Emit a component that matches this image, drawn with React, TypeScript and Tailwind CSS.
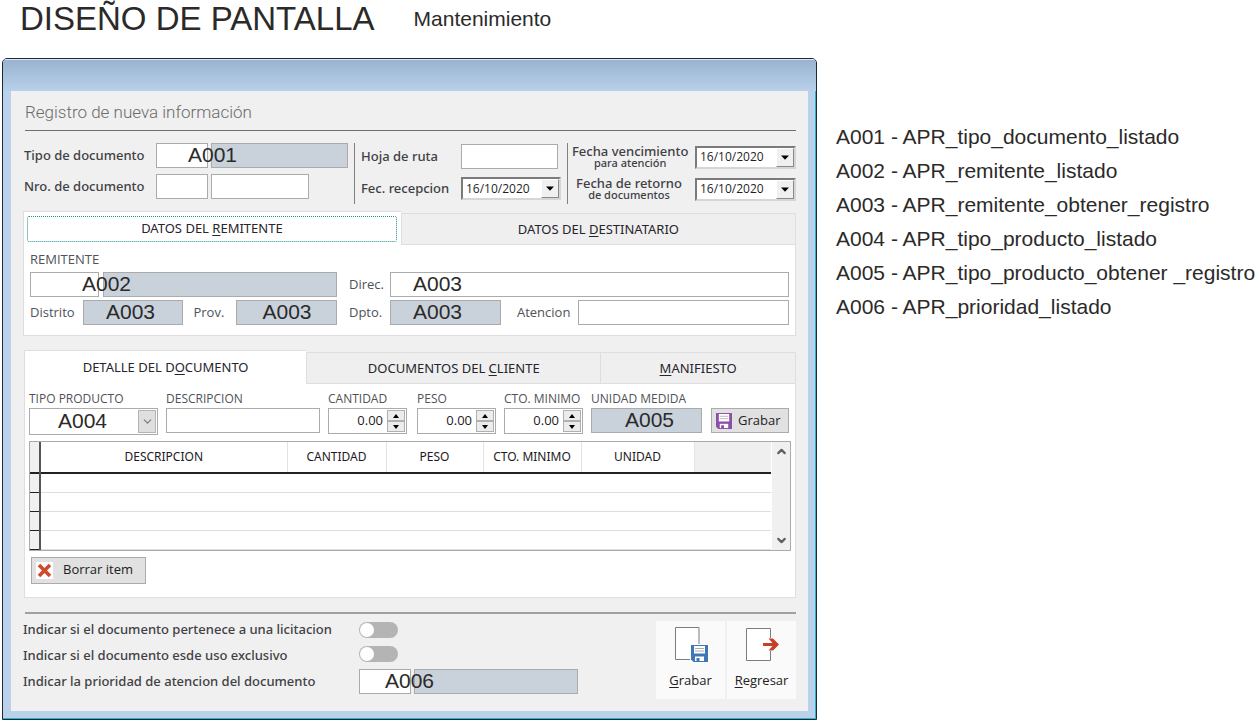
import React from 'react';
import { ChevronDown, ChevronUp } from 'lucide-react';

const boxBase = 'block h-[25px] min-w-0 border border-[#ababab] px-1 text-[13px] outline-none';

function Box({ id, label, className = '', filled = false }: { id?: string; label: string; className?: string; filled?: boolean }) {
  return (
    <input
      id={id}
      type="text"
      aria-label={id ? undefined : label}
      readOnly={filled}
      className={`${boxBase} ${filled ? 'bg-[#c9d1db]' : 'bg-white'} ${className}`}
    />
  );
}

function Note({ children, className }: { children: string; className: string }) {
  return (
    <span className={`pointer-events-none absolute top-0 font-['Liberation_Sans',sans-serif] text-[21px] leading-[24px] text-[#2b2a29] ${className}`}>
      {children}
    </span>
  );
}

function CodedBox({ id, label, code, className = '', notePlace, filled = true }: { id: string; label: string; code: string; className?: string; notePlace: string; filled?: boolean }) {
  return (
    <div className={`relative ${className}`}>
      <Box id={id} label={label} filled={filled} className="w-full" />
      <Note className={notePlace}>{code}</Note>
    </div>
  );
}

function DateBox({ id, className = '' }: { id: string; className?: string }) {
  return (
    <div className={`flex h-[23px] border-2 border-t-[#7b7b7b] border-l-[#7b7b7b] border-r-[#d6d6d6] border-b-[#d6d6d6] bg-white ${className}`}>
      <input id={id} type="text" defaultValue="16/10/2020" className="min-w-0 flex-1 bg-transparent pl-[3px] text-[12px] text-[#1f1f1f] outline-none" />
      <button type="button" aria-label="Abrir calendario" className="flex w-[18px] shrink-0 items-center justify-center border border-t-white border-l-white border-r-[#8a8a8a] border-b-[#8a8a8a] bg-[#f0f0f0]">
        <svg width="8" height="5" viewBox="0 0 8 5"><path d="M0 0.5h8L4 4.8z" fill="#000" /></svg>
      </button>
    </div>
  );
}

function Spinner({ id, label, className }: { id: string; label: string; className: string }) {
  return (
    <div className={className}>
      <label htmlFor={id} className={smallCaps}>{label}</label>
      <div className="flex h-[26px] border border-[#ababab] bg-white p-px">
        <input id={id} type="text" defaultValue="0.00" className="min-w-0 flex-1 bg-transparent pr-1 text-right text-[13px] text-[#222] outline-none" />
        <div className="flex w-[18px] flex-col">
          <button type="button" aria-label={`Aumentar ${label}`} className="flex flex-1 items-center justify-center border border-[#b0b0b0] bg-[#ececec]">
            <svg width="6" height="4" viewBox="0 0 6 4"><path d="M0 4h6L3 0z" fill="#000" /></svg>
          </button>
          <button type="button" aria-label={`Disminuir ${label}`} className="flex flex-1 items-center justify-center border border-[#b0b0b0] bg-[#ececec]">
            <svg width="6" height="4" viewBox="0 0 6 4"><path d="M0 0h6L3 4z" fill="#000" /></svg>
          </button>
        </div>
      </div>
    </div>
  );
}

function Toggle({ id }: { id: string }) {
  return (
    <input
      id={id}
      type="checkbox"
      role="switch"
      className="h-4 w-[39px] appearance-none rounded-full bg-[#b4b4b4] p-px before:block before:size-[14px] before:rounded-full before:bg-white checked:bg-[#3f76b5] checked:pl-6"
    />
  );
}

function Floppy({ color, size }: { color: string; size: number }) {
  return (
    <svg width={size} height={size} viewBox="0 0 17 17">
      <path d="M0 0h17v17H2.500L0 14.500z" fill={color} />
      <path d="M3 1h11v8H3z" fill="#fff" />
      <path d="M4 3.500h9M4 6h9" stroke="#b5b5b5" />
      <path d="M4 11.500h9V16H4z" fill="#fff" />
      <path d="M5.500 13h3v3h-3z" fill={color} />
    </svg>
  );
}

const formLabel = "font-['Noto_Sans',sans-serif] text-[13px] font-medium text-[#3f4145] whitespace-nowrap";
const panelLabel = 'text-[13px] text-[#4f5257] whitespace-nowrap';
const smallCaps = 'block h-[18px] text-[12px] leading-[18px] text-[#4f5257] whitespace-nowrap';
const tabText = "font-['Noto_Sans',sans-serif] text-[13px] text-[#26242c]";
const idleTab = `mt-[2px] h-[32px] border border-[#dedede] bg-[#efefef] pt-[2px] ${tabText}`;

function Window() {
  return (
    <main className="min-w-0 flex-1 overflow-hidden rounded-t-[5px] border border-[#1d2a33] bg-[#b9d1ea] font-['Open_Sans','Noto_Sans',sans-serif]">
      <div className="h-8 bg-linear-to-b from-[#98b2d0] to-[#b8d0e9] shadow-[inset_0_1px_0_#dfe8f2]" />
      <div className="border-r border-b border-[#27b5cf] pr-[7px] pb-[7px] pl-2">
        <form className="bg-[#f0f0f0] pt-2 pr-3 pb-[12px] pl-[13px]" onSubmit={(e) => e.preventDefault()}>
          <h2 className="ml-px border-b border-[#707070] pb-[5px] font-['Roboto',sans-serif] text-[17px] leading-[26px] font-light text-[#6b6b6b]">
            Registro de nueva información
          </h2>

          <div className="mt-3 flex h-[61px]">
            <div className="flex min-w-0 flex-1 flex-col gap-[6px]">
              <div className="flex items-center">
                <label htmlFor="tipo" className={`${formLabel} w-[132px] shrink-0`}>Tipo de documento</label>
                <div className="relative flex min-w-0 flex-1 gap-[3px]">
                  <Box id="tipo" label="Tipo" className="w-[52px]" />
                  <Box label="Descripción del tipo" filled className="flex-1" />
                  <Note className="left-8">A001</Note>
                </div>
              </div>
              <div className="flex items-center">
                <label htmlFor="nro" className={`${formLabel} w-[132px] shrink-0`}>Nro. de documento</label>
                <div className="flex gap-[3px]">
                  <Box id="nro" label="Serie" className="w-[52px]" />
                  <Box label="Número" className="w-[98px]" />
                </div>
              </div>
            </div>
            <div className="mx-[6px] w-px shrink-0 bg-[#808080]" />
            <div className="flex w-[200px] shrink-0 flex-col gap-2 pt-px">
              <div className="flex items-center">
                <label htmlFor="hoja" className={`${formLabel} flex-1`}>Hoja de ruta</label>
                <Box id="hoja" label="Hoja" className="mr-[3px] w-[97px]" />
              </div>
              <div className="flex items-center">
                <label htmlFor="recep" className={`${formLabel} flex-1`}>Fec. recepcion</label>
                <DateBox id="recep" className="w-[100px]" />
              </div>
            </div>
            <div className="mr-1 ml-[6px] w-px shrink-0 bg-[#808080]" />
            <div className="flex w-[224px] shrink-0 flex-col gap-[10px] pt-[3px]">
              <div className="flex h-[22px] items-center justify-between">
                <label htmlFor="venc" className={`${formLabel} text-center leading-[11px]`}>
                  Fecha vencimiento<br /><span className="text-[11px]">para atención</span>
                </label>
                <DateBox id="venc" className="w-[101px]" />
              </div>
              <div className="flex h-[22px] items-center justify-between">
                <label htmlFor="ret" className={`${formLabel} w-[114px] text-center leading-[11px]`}>
                  Fecha de retorno<br /><span className="text-[11px]">de documentos</span>
                </label>
                <DateBox id="ret" className="w-[101px]" />
              </div>
            </div>
          </div>

          <section className="mt-[7px] -ml-px border border-t-0 border-[#dedede] bg-white">
            <div role="tablist" className="-mx-px flex bg-[#f0f0f0]">
              <button type="button" role="tab" aria-selected="true" className={`h-[34px] flex-[378] border-t border-l border-[#dedede] bg-white p-[3px] pr-1 ${tabText}`}>
                <span className="flex h-[26px] items-center justify-center rounded-[2px] border border-dotted border-[#1a958c]">
                  <span>DATOS DEL <u className="underline-offset-2">R</u>EMITENTE</span>
                </span>
              </button>
              <button type="button" role="tab" aria-selected="false" className={`${idleTab} flex-[402]`}>
                DATOS DEL <u className="underline-offset-2">D</u>ESTINATARIO
              </button>
            </div>
            <div className="px-[6px] pt-[5px] pb-[10px]">
              <label htmlFor="rem" className={`${panelLabel} block leading-[18px]`}>REMITENTE</label>
              <div className="mt-1 flex items-center">
                <div className="relative flex flex-1 gap-1">
                  <Box id="rem" label="Remitente" className="w-[69px]" />
                  <Box label="Nombre del remitente" filled className="flex-1" />
                  <Note className="left-[52px]">A002</Note>
                </div>
                <label htmlFor="direc" className={`${panelLabel} w-[53px] pl-3`}>Direc.</label>
                <CodedBox id="direc" label="Direc." code="A003" filled={false} className="flex-[1.3]" notePlace="left-[23px]" />
              </div>
              <div className="mt-[3px] flex items-center">
                <div className="flex flex-1 items-center">
                  <label htmlFor="dist" className={`${panelLabel} w-[53px]`}>Distrito</label>
                  <CodedBox id="dist" label="Distrito" code="A003" className="flex-1" notePlace="left-[23px]" />
                  <label htmlFor="prov" className={`${panelLabel} w-[53px] pl-[10px]`}>Prov.</label>
                  <CodedBox id="prov" label="Prov." code="A003" className="flex-1" notePlace="left-[26px]" />
                </div>
                <label htmlFor="dpto" className={`${panelLabel} w-[53px] pl-3`}>Dpto.</label>
                <div className="flex flex-[1.3] items-center">
                  <CodedBox id="dpto" label="Dpto." code="A003" className="w-[111px]" notePlace="left-[23px]" />
                  <label htmlFor="aten" className={`${panelLabel} w-[77px] pl-4`}>Atencion</label>
                  <Box id="aten" label="Atencion" className="flex-1" />
                </div>
              </div>
            </div>
          </section>

          <section className="mt-[14px] border border-t-0 border-[#dedede] bg-white">
            <div role="tablist" className="-mx-px flex bg-[#f0f0f0]">
              <button type="button" role="tab" aria-selected="true" className={`h-[34px] flex-[283] border-t border-l border-[#dedede] bg-white ${tabText}`}>
                DETALLE DEL D<u className="underline-offset-2">O</u>CUMENTO
              </button>
              <button type="button" role="tab" aria-selected="false" className={`${idleTab} flex-[295]`}>
                DOCUMENTOS DEL <u className="underline-offset-2">C</u>LIENTE
              </button>
              <button type="button" role="tab" aria-selected="false" className={`${idleTab} flex-[195] border-l-0`}>
                <u className="underline-offset-2">M</u>ANIFIESTO
              </button>
            </div>

            <div className="px-1 pt-[6px] pb-[13px]">
              <div className="flex items-start pr-[2px]">
                <div className="w-[129px]">
                  <label htmlFor="prod" className={smallCaps}>TIPO PRODUCTO</label>
                  <div className="relative">
                    <select id="prod" className="block h-[27px] w-full appearance-none border border-[#ababab] bg-white pb-[2px] pl-7 font-['Liberation_Sans',sans-serif] text-[21px] leading-[22px] text-[#2b2a29]">
                      <option>A004</option>
                    </select>
                    <span className="pointer-events-none absolute top-[2px] right-[2px] flex h-[23px] w-[18px] items-center justify-center border border-[#b4b4b4] bg-[#dfdfdf]">
                      <ChevronDown size={13} strokeWidth={2} className="text-[#777]" />
                    </span>
                  </div>
                </div>
                <div className="ml-2 flex-1">
                  <label htmlFor="desc" className={smallCaps}>DESCRIPCION</label>
                  <Box id="desc" label="Descripcion" className="w-full" />
                </div>
                <Spinner id="cant" label="CANTIDAD" className="ml-2 w-[79px]" />
                <Spinner id="peso" label="PESO" className="ml-[10px] w-[79px]" />
                <Spinner id="cto" label="CTO. MINIMO" className="ml-2 w-[79px]" />
                <div className="ml-2 w-[111px]">
                  <label htmlFor="unidad" className={smallCaps}>UNIDAD MEDIDA</label>
                  <CodedBox id="unidad" label="Unidad" code="A005" notePlace="left-[34px]" />
                </div>
                <button type="button" className="mt-[18px] ml-[9px] flex h-[25px] w-[78px] items-center gap-[6px] border border-[#ababab] bg-[#e1e1e1] pl-1 text-[13px] text-[#222]">
                  <Floppy color="#8d4ea8" size={16} />
                  Grabar
                </button>
              </div>

              <div className="mt-[6px] flex border border-[#a9abb0]">
                <table className="flex-1 table-fixed border-collapse text-[12px] text-[#1c1a22]">
                  <colgroup>
                    <col className="w-[10px]" />
                    <col />
                    <col className="w-[99px]" />
                    <col className="w-[97px]" />
                    <col className="w-[98px]" />
                    <col className="w-[113px]" />
                    <col className="w-[77px]" />
                  </colgroup>
                  <thead className="font-['Noto_Sans',sans-serif]">
                    <tr className="h-[31px] border-b-2 border-[#222]">
                      <td className="border-r-2 border-r-[#555] bg-[#f0f0f0]" />
                      <th className="border-r border-r-[#e3e3e3] font-normal">DESCRIPCION</th>
                      <th className="border-r border-r-[#e3e3e3] font-normal">CANTIDAD</th>
                      <th className="border-r border-r-[#e3e3e3] font-normal">PESO</th>
                      <th className="border-r border-r-[#e3e3e3] font-normal whitespace-nowrap">CTO. MINIMO</th>
                      <th className="border-r border-r-[#e3e3e3] font-normal">UNIDAD</th>
                      <td className="bg-[#efefef]" />
                    </tr>
                  </thead>
                  <tbody>
                    {[0, 1, 2, 3].map((row) => (
                      <tr key={row} className="h-[19px]">
                        <td className="border-r-2 border-b border-r-[#555] border-b-[#222] bg-[#f0f0f0]" />
                        <td colSpan={6} className="border-b border-[#dedede]" />
                      </tr>
                    ))}
                  </tbody>
                </table>
                <div className="ml-px flex w-[18px] flex-col items-center justify-between bg-[#f0f0f0] py-[3px] text-[#606060]">
                  <ChevronUp size={13} strokeWidth={4} />
                  <ChevronDown size={13} strokeWidth={4} />
                </div>
              </div>

              <button type="button" className="mt-[6px] ml-[2px] flex h-[27px] w-[115px] items-center gap-[10px] border border-[#ababab] bg-[#e1e1e1] pl-1 text-[13px] text-[#222]">
                <span className="flex size-[17px] items-center justify-center bg-white">
                  <svg width="15" height="15" viewBox="0 0 15 15"><path d="M2 2l11 11M13 2L2 13" stroke="#cf4a2e" strokeWidth="3.600" /></svg>
                </span>
                Borrar item
              </button>
            </div>
          </section>

          <div className="mt-[14px] ml-px h-[2px] bg-[#a0a0a0]" />

          <div className="-ml-px flex justify-between pt-[7px]">
            <div className="grid grid-cols-[336px_219px] content-start">
              <label htmlFor="lic" className={`${formLabel} leading-[16px]`}>Indicar si el documento pertenece a una licitacion</label>
              <div className="flex h-6 pt-px"><Toggle id="lic" /></div>
              <label htmlFor="exc" className={`${formLabel} leading-[20px]`}>Indicar si el documento esde uso exclusivo</label>
              <div className="flex h-6 pt-px"><Toggle id="exc" /></div>
              <label htmlFor="prio" className={`${formLabel} leading-[25px]`}>Indicar la prioridad de atencion del documento</label>
              <div className="relative flex gap-[3px]">
                <Box id="prio" label="Prioridad" className="w-[52px]" />
                <Box label="Descripción de la prioridad" filled className="flex-1" />
                <Note className="left-[26px]">A006</Note>
              </div>
            </div>
            <div className="flex gap-[2px]">
              <button type="button" className="flex h-[78px] w-[69px] flex-col items-center bg-[#fafafa] pt-[5px] text-[13px] text-[#222]">
                <svg width="36" height="38" viewBox="0 0 36 38">
                  <path d="M2.500 1.500h23.500v32H2.500z" fill="#fff" stroke="#7d7d7d" />
                  <g transform="translate(18 19)">
                    <path d="M-1 -1h19v19H-1z" fill="#fff" />
                    <path d="M0 0h17v17H2.500L0 14.500z" fill="#3f76b5" />
                    <path d="M3 1h11v7.500H3zM4 11.500h9V16H4z" fill="#fff" />
                    <path d="M4 3.500h9M4 6h9" stroke="#aaa" />
                    <path d="M5.500 13h3v3h-3z" fill="#3f76b5" />
                  </g>
                </svg>
                <span className="mt-[7px]"><u className="underline-offset-2">G</u>rabar</span>
              </button>
              <button type="button" className="flex h-[78px] w-[69px] flex-col items-center bg-[#fafafa] pt-[5px] text-[13px] text-[#222]">
                <svg width="36" height="38" viewBox="0 0 36 38">
                  <path d="M2.500 2.500h24v32h-24z" fill="#fff" stroke="#7d7d7d" />
                  <path d="M25 12h5v13h-5z" fill="#fff" />
                  <path d="M19 17h9.500l-4-4.500h4.500l6 6-6 6h-4.500l4-4.500H19z" fill="#c93f25" />
                </svg>
                <span className="mt-[7px]"><u className="underline-offset-2">R</u>egresar</span>
              </button>
            </div>
          </div>
        </form>
      </div>
    </main>
  );
}

const legend = [
  'A001 - APR_tipo_documento_listado',
  'A002 - APR_remitente_listado',
  'A003 - APR_remitente_obtener_registro',
  'A004 - APR_tipo_producto_listado',
  'A005 - APR_tipo_producto_obtener _registro',
  'A006 - APR_prioridad_listado',
];

export default function App() {
  return (
    <div className="bg-white pl-[2px] font-['Liberation_Sans',sans-serif] text-[#2b2a29]">
      <header className="flex h-[58px] items-start gap-[39px] pl-[18px]">
        <h1 className="text-[33px] leading-[37px] whitespace-nowrap">DISEÑO DE PANTALLA</h1>
        <p className="text-[21px] leading-[38px]">Mantenimiento</p>
      </header>
      <div className="flex items-start gap-[19px]">
        <Window />
        <ul className="w-[419px] shrink-0 pt-[62px] text-[21px] leading-[34px] whitespace-nowrap">
          {legend.map((item) => (
            <li key={item}>{item}</li>
          ))}
        </ul>
      </div>
    </div>
  );
}
